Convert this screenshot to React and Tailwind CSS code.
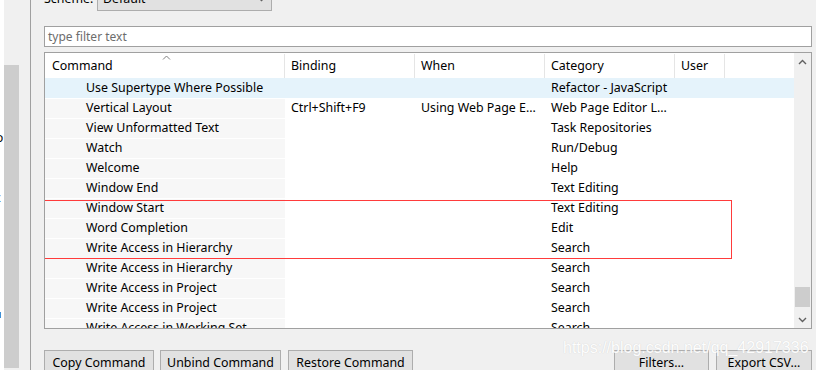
import React from 'react'

const font = { fontFamily: '"Noto Sans", "Noto Sans CJK SC", sans-serif' }

const rows = [
  ['Use Supertype Where Possible', '', '', 'Refactor - JavaScript'],
  ['Vertical Layout', 'Ctrl+Shift+F9', 'Using Web Page E...', 'Web Page Editor L...'],
  ['View Unformatted Text', '', '', 'Task Repositories'],
  ['Watch', '', '', 'Run/Debug'],
  ['Welcome', '', '', 'Help'],
  ['Window End', '', '', 'Text Editing'],
  ['Window Start', '', '', 'Text Editing'],
  ['Word Completion', '', '', 'Edit'],
  ['Write Access in Hierarchy', '', '', 'Search'],
  ['Write Access in Hierarchy', '', '', 'Search'],
  ['Write Access in Project', '', '', 'Search'],
  ['Write Access in Project', '', '', 'Search'],
  ['Write Access in Working Set', '', '', 'Search'],
]

const Chevron = ({ up }) => (
  <svg width="9" height="6" viewBox="0 0 9 6" className="text-[#606060]">
    <path d={up ? 'M1 5 L4.5 1.5 L8 5' : 'M1 1 L4.5 4.5 L8 1'} fill="none" stroke="currentColor" strokeWidth="1.4" />
  </svg>
)

const Button = ({ children, w }) => (
  <div className={`h-[26px] ${w} border border-[#adadad] bg-[#e1e1e1] flex items-center justify-center text-[12.4px] text-black shrink-0`}>
    {children}
  </div>
)

export default function App() {
  return (
    <div className="w-[816px] h-[370px] overflow-hidden flex bg-[#f0f0f0] text-black" style={font}>
      {/* other view, cut off */}
      <div className="w-[30px] h-full flex shrink-0 relative">
        <div className="w-[4px] h-full bg-white" />
        <div className="w-[15px] h-full bg-[#f0f0f0] flex flex-col">
          <div className="h-[65px]" />
          <div className="flex-1 bg-[#cdcdcd] mb-[2px]" />
        </div>
        <div className="flex-1 h-full bg-[#f0f0f0]" />
        <span className="absolute left-[-4px] top-[129px] text-[12px]">o</span>
        <span className="absolute left-[-5px] top-[189px] text-[12px]">c</span>
        <span className="absolute left-[-2px] top-[312px] w-[3px] h-[6px] bg-[#3d8fd6]" />
      </div>
      <div className="w-px h-full bg-[#a0a0a0] shrink-0" />

      {/* preferences page */}
      <div className="flex-1 flex flex-col pl-[13px] pr-[4px] relative">
        <div className="flex items-center -mt-[13px] h-[24px] shrink-0">
          <span className="text-[12.4px] w-[53px]">Scheme:</span>
          <div className="w-[175px] h-[23px] border border-[#adadad] bg-[#e1e1e1] flex items-center px-[5px] text-[12.4px]">
            <span className="flex-1">Default</span>
            <Chevron />
          </div>
        </div>

        <div className="mt-[15px] h-[21px] shrink-0 border border-[#a0a0a0] bg-white flex items-center px-[3px] text-[12px] text-[#6d6d6d]">
          type filter text
        </div>

        <div className="mt-[5px] h-[277px] shrink-0 border border-[#a0a0a0] bg-white flex overflow-hidden relative">
          <div className="flex-1 flex flex-col overflow-hidden">
            <div className="h-[25px] pt-px flex text-[12.4px] shrink-0 relative">
              <div className="w-[240px] border-r border-[#e5e5e5] pl-[7px] flex items-center">Command</div>
              <div className="w-[130px] border-r border-[#e5e5e5] pl-[6px] flex items-center">Binding</div>
              <div className="w-[130px] border-r border-[#e5e5e5] pl-[6px] flex items-center">When</div>
              <div className="w-[130px] border-r border-[#e5e5e5] pl-[6px] flex items-center">Category</div>
              <div className="w-[50px] border-r border-[#e5e5e5] pl-[6px] flex items-center">User</div>
              <div className="flex-1" />
              <svg width="9" height="5" viewBox="0 0 9 5" className="absolute left-[117px] top-[2px] text-[#808080]">
                <path d="M1 4.5 L4.5 1 L8 4.5" fill="none" stroke="currentColor" strokeWidth="1" />
              </svg>
            </div>
            {rows.map((r, i) => (
              <div key={i} className={`h-[20px] pt-px flex text-[12.4px] shrink-0 ${i === 0 ? 'bg-[#e5f3fb]' : ''}`}>
                <div className={`w-[240px] pl-[41px] flex items-center whitespace-nowrap ${i === 0 ? '' : 'bg-[#f7f7f7]'}`}>{r[0]}</div>
                <div className="w-[130px] pl-[6px] flex items-center whitespace-nowrap">{r[1]}</div>
                <div className="w-[130px] pl-[6px] flex items-center whitespace-nowrap">{r[2]}</div>
                <div className="w-[130px] pl-[6px] flex items-center whitespace-nowrap">{r[3]}</div>
                <div className="flex-1" />
              </div>
            ))}
          </div>
          <div className="w-[17px] bg-[#f0f0f0] flex flex-col items-center shrink-0">
            <div className="h-[17px] flex items-center justify-center"><Chevron up /></div>
            <div className="flex-1 w-full flex flex-col justify-end px-[1px]">
              <div className="h-[20px] bg-[#cdcdcd] mb-[4px]" />
            </div>
            <div className="h-[17px] flex items-center justify-center"><Chevron /></div>
          </div>
          {/* annotation */}
          <div className="absolute left-[-1px] top-[147px] w-[688px] h-[59px] border border-solid border-[#ff3b3b]" />
        </div>

        <div className="mt-[21px] flex shrink-0">
          <Button w="w-[110px]">Copy Command</Button>
          <div className="ml-[6px]"><Button w="w-[121px]">Unbind Command</Button></div>
          <div className="ml-[7px]"><Button w="w-[125px]">Restore Command</Button></div>
          <div className="flex-1" />
          <Button w="w-[95px]">Filters...</Button>
          <div className="ml-[7px]"><Button w="w-[96px]">Export CSV...</Button></div>
        </div>

        <div className="absolute left-[532px] top-[336px] text-[16px] text-white whitespace-nowrap [text-shadow:0_0_1px_#c8c8c8] opacity-90" style={{ fontFamily: '"Liberation Sans", sans-serif' }}>
          https://blog.csdn.net/qq_42917336
        </div>
      </div>
    </div>
  )
}
